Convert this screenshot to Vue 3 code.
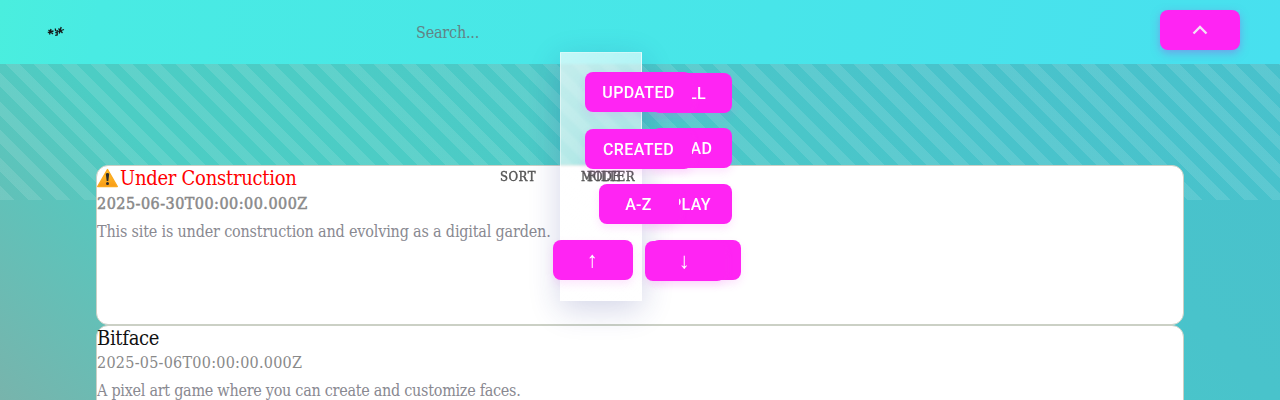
<script setup>
const posts = [
  { title: 'Under Construction', date: '2025-06-30T00:00:00.000Z', text: 'This site is under construction and evolving as a digital garden.', pinned: true },
  { title: 'Bitface', date: '2025-05-06T00:00:00.000Z', text: 'A pixel art game where you can create and customize faces.', pinned: false }
]
const buttons = [
  { id: 'all', label: 'ALL' },
  { id: 'read', label: 'READ' },
  { id: 'play', label: 'PLAY' },
  { id: 'blank', label: '' },
  { id: 'updated', label: 'UPDATED' },
  { id: 'created', label: 'CREATED' },
  { id: 'az', label: 'A-Z' },
  { id: 'up', label: '↑' },
  { id: 'down', label: '↓' }
]
</script>

<template>
  <div class="page">
    <header class="topbar">
      <svg class="logo" width="18" height="12" viewBox="0 0 18 12" fill="none" stroke="#151b1b" stroke-width="1.3">
        <path d="M1.500 4l4.500 4M4 3L2.500 8.500M.8 6.500L6.500 5M8.300 2.500l.3 2.500M10.200 4v5l-2 .3M8.300 6.500h2M11.500 2.500l4 4.500M14.200 1l-2 6.500M11 5.500l6-2" />
      </svg>
      <input class="search" placeholder="Search..." />
      <button class="btn toggle" aria-label="Collapse">
        <svg width="16" height="10" viewBox="0 0 16 10" fill="none" stroke="#f5dff7" stroke-width="2.3">
          <path d="M1.500 8.500L8 2l6.500 6.500" />
        </svg>
      </button>
    </header>
    <div class="stripes"></div>
    <main class="posts">
      <article v-for="p in posts" :key="p.title" class="post" :class="{ pinned: p.pinned }">
        <h2>
          <svg v-if="p.pinned" class="warn" width="22" height="20" viewBox="0 0 22 20">
            <defs>
              <linearGradient id="amber" x1="0" y1="0" x2="0" y2="1">
                <stop offset="0" stop-color="#ffc52e" />
                <stop offset="1" stop-color="#f99b16" />
              </linearGradient>
            </defs>
            <path d="M10.500 1.500L20.300 18.500H.7z" fill="url(#amber)" stroke="#fba91f" stroke-width="1.400" stroke-linejoin="round" />
            <path d="M8.800 5.800q1.700-1.400 3.400 0l-.9 7.200H9.700z" fill="#2b2b2b" />
            <circle cx="10.500" cy="15.600" r="1.500" fill="#2b2b2b" />
          </svg><span>{{ p.title }}</span>
        </h2>
        <time>{{ p.date }}</time>
        <p>{{ p.text }}</p>
      </article>
    </main>
    <div class="glass"></div>
    <span class="label sort">SORT</span>
    <span class="label mode">MODE</span>
    <span class="label filter">FILTER</span>
    <button v-for="b in buttons" :key="b.id" class="btn float" :class="b.id">{{ b.label }}</button>
  </div>
</template>

<style>
body {
  margin: 0;
  overflow: hidden;
}
</style>

<style scoped>
.page {
  position: relative;
  height: 400px;
  overflow: hidden;
  box-sizing: border-box;
  background: linear-gradient(45deg, #78b4ac 0, #4ccdc4 280px, #4cccc5 460px, #49c3cb 900px, #48c1cc 100%);
  font-family: "DejaVu Serif Condensed", "DejaVu Serif", serif;
  font-stretch: condensed;
}
.topbar {
  position: relative;
  z-index: 1;
  height: 64px;
  display: flex;
  align-items: center;
  box-sizing: border-box;
  padding: 0 40px 0 47px;
  background: linear-gradient(100deg, #4aeede 0, #49ebe3 100px, #48e5e9 760px, #48e0ef 100%);
}
.logo {
  width: 18px;
  flex: none;
}
.search {
  width: 460px;
  margin-left: 351px;
  padding: 0;
  border: 0;
  outline: 0;
  background: transparent;
  font: condensed 16px "DejaVu Serif Condensed", "DejaVu Serif", serif;
  letter-spacing: -0.2px;
}
.search::placeholder {
  color: #628486;
  opacity: 1;
}
.btn {
  height: 40px;
  width: 80px;
  padding: 0;
  border: 0;
  border-radius: 8px;
  background: #ff24f3;
  color: #fff;
  box-shadow: 0 4px 9px rgba(240, 80, 240, 0.14);
  font: 500 16px Roboto, sans-serif;
  letter-spacing: 0.35px;
}
.toggle {
  margin: -4px 0 0 auto;
  display: flex;
  align-items: center;
  justify-content: center;
  box-shadow: 0 3px 8px rgba(150, 100, 230, 0.5);
}
.stripes {
  position: absolute;
  inset: 0 0 auto;
  height: 200px;
  background: repeating-linear-gradient(45deg, rgba(255, 255, 255, 0.11) 0 10px, transparent 10px 20px);
}
.posts {
  position: relative;
  margin: 101px 96px 0;
}
.post {
  box-sizing: border-box;
  height: 160px;
  background: #fff;
  border: 1px solid #cbd0c5;
  border-radius: 12px;
}
h2 {
  display: flex;
  margin: 0;
  height: 25px;
  color: #111;
  font-size: 20px;
  font-weight: 400;
  line-height: 24px;
  letter-spacing: -0.3px;
}
.pinned h2 {
  height: 26px;
  color: #f00;
  letter-spacing: -0.27px;
}
.warn {
  margin: 2px 1px 0 0;
}
time {
  display: block;
  height: 25px;
  color: #898989;
  font-size: 16px;
  line-height: 24px;
  letter-spacing: 0.25px;
}
.pinned time {
  -webkit-text-stroke: 0.5px #898989;
  letter-spacing: 0.48px;
}
p {
  margin: 3px 0 0;
  color: #898991;
  font-size: 16px;
  line-height: 24px;
  white-space: nowrap;
  letter-spacing: -0.27px;
}
.pinned p {
  letter-spacing: -0.18px;
}
.glass {
  position: absolute;
  left: 560px;
  top: 52px;
  z-index: 2;
  width: 82px;
  height: 249px;
  box-sizing: border-box;
  border: 1px solid rgba(255, 255, 255, 0.55);
  background: linear-gradient(125deg, rgba(255, 255, 255, 0.68), rgba(255, 255, 255, 0.4));
  box-shadow: 0 8px 32px rgba(31, 38, 135, 0.2);
  backdrop-filter: blur(1px);
}
.label {
  position: absolute;
  top: 168px;
  z-index: 3;
  color: #555;
  -webkit-text-stroke: 0.4px #555;
  font-size: 13px;
  line-height: 17px;
  letter-spacing: 0.5px;
}
.sort { left: 500px; }
.mode { left: 581px; letter-spacing: 0; }
.filter { left: 587px; letter-spacing: 0.6px; }
.float {
  position: absolute;
  z-index: 4;
}
.all { left: 651.5px; top: 73px; }
.read { left: 651.5px; top: 128px; }
.play { left: 644.5px; top: 184px; width: 87px; padding-left: 6px; }
.blank { left: 651px; top: 240px; width: 90px; }
.updated { left: 584.5px; top: 72px; width: 107px; padding-left: 1px; }
.created { left: 585px; top: 129px; width: 107px; }
.az { left: 598.5px; top: 184px; }
.up { left: 552.5px; top: 240px; }
.down { left: 644.5px; top: 241px; }
.up,
.down {
  font-size: 22px;
  font-weight: 300;
}
</style>
